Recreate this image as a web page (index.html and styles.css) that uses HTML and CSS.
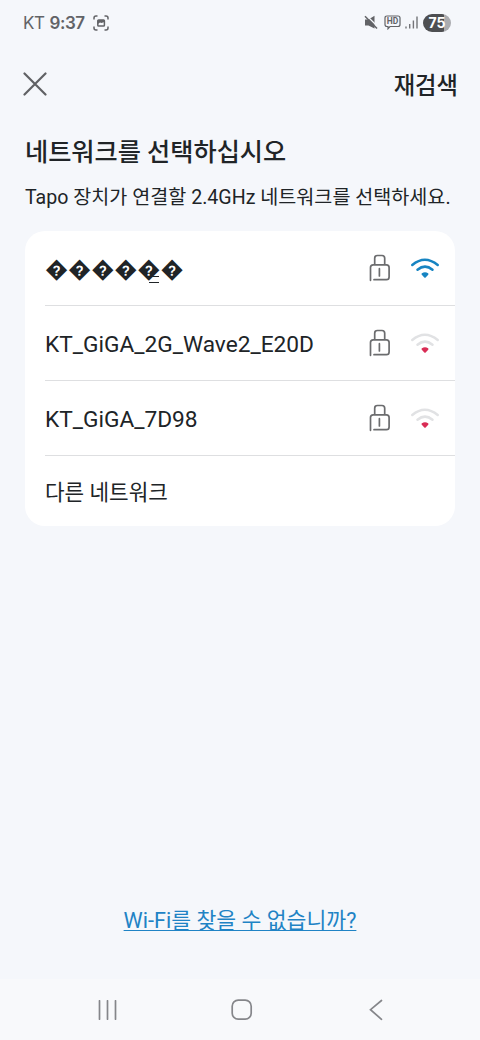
FILE: index.html
```html
<!DOCTYPE html>
<html lang="ko">
<head>
<meta charset="utf-8">
<title>네트워크 선택</title>
<link rel="stylesheet" href="styles.css">
</head>
<body>
<svg class="defs" width="0" height="0" aria-hidden="true">
  <symbol id="lock" viewBox="0 0 22 28">
    <path d="M5.7 10.2V4.2Q5.7 1.5 8.4 1.5H13Q15.700 1.500 15.700 4.200V10.200"/>
    <path d="M1.500 26.300V13.500Q1.500 10.800 4.200 10.800H17.400Q20.100 10.800 20.100 13.500V23Q20.100 25.700 17.400 25.700H5M10.400 14.700V22"/>
  </symbol>
  <symbol id="wifi" viewBox="0 0 30 22">
    <path class="arc" d="M2.300 8Q14.800-2.400 27.700 8"/>
    <path class="arc" d="M7.500 12.800Q15 6.500 22.500 12.800"/>
    <path class="dot" d="M11.900 16.200Q15 14.400 18.100 16.200Q18.900 16.900 18.200 17.700L15.700 20.400Q15 21.100 14.300 20.400L11.800 17.700Q11.100 16.900 11.900 16.200Z"/>
  </symbol>
</svg>
<div class="screen">
  <header class="status">
    <span class="carrier">KT</span>
    <span class="clock">9:37</span>
    <svg class="capture" width="16" height="16" viewBox="0 0 16 16">
      <path d="M1 4.500V3Q1 1 3 1H4.500M11.500 1H13Q15 1 15 3V4.500M15 11.500V13Q15 15 13 15H11.500M4.500 15H3Q1 15 1 13V11.500"/>
      <rect x="4.800" y="5" width="6.600" height="6" rx=".8"/>
      <path class="solid" d="M4.800 5H11.400V7L8.500 8L7 7.500L4.800 9Z"/>
    </svg>
    <div class="status-right">
      <svg class="mute" width="14" height="15" viewBox="0 0 14 15">
        <path class="solid" d="M1 4.500H4.500L10.500 .7V13.500L4.500 10.500H1Z"/>
        <path class="gap" d="M2.500 .5L14 12"/>
        <path class="slash" d="M1 1.200L13 13.500"/>
      </svg>
      <svg class="hd" width="17" height="15" viewBox="0 0 17 15">
        <path d="M3 1H14Q16 1 16 3V9.500Q16 11.500 14 11.500H6L4 13.700V11.500H3Q1 11.500 1 9.500V3Q1 1 3 1Z"/>
        <text x="2.700" y="9.200" textLength="11.500">HD</text>
      </svg>
      <svg class="signal" width="13" height="13" viewBox="0 0 13 13">
        <path d="M1 10.500V12.500M4.700 8V12.500M8.400 4.500V12.500M12 .5V12.500"/>
      </svg>
      <span class="battery">75</span>
    </div>
  </header>
  <nav class="toolbar">
    <svg width="24" height="24" viewBox="0 0 24 24"><path d="M1.500 1.500L22.500 22.500M22.500 1.500L1.500 22.500"/></svg>
    <span class="rescan">재검색</span>
  </nav>
  <main class="content">
    <h1>네트워크를 선택하십시오</h1>
    <p class="hint">Tapo 장치가 연결할 2.4GHz 네트워크를 선택하세요.</p>
    <ul class="card">
      <li class="row"><span class="ssid garbled">����<span class="marked">�</span>�</span>
        <svg class="lock" width="22" height="28"><use href="#lock"/></svg>
        <svg class="wifi strong" width="30" height="22"><use href="#wifi"/></svg></li>
      <li class="row"><span class="ssid">KT_GiGA_2G_Wave2_E20D</span>
        <svg class="lock" width="22" height="28"><use href="#lock"/></svg>
        <svg class="wifi poor" width="30" height="22"><use href="#wifi"/></svg></li>
      <li class="row"><span class="ssid">KT_GiGA_7D98</span>
        <svg class="lock" width="22" height="28"><use href="#lock"/></svg>
        <svg class="wifi poor" width="30" height="22"><use href="#wifi"/></svg></li>
      <li class="row other"><span class="ssid">다른 네트워크</span></li>
    </ul>
  </main>
  <a class="help">Wi-Fi를 찾을 수 없습니까?</a>
  <footer class="navbar">
    <svg width="20" height="20" viewBox="0 0 20 20"><path d="M1.500 .8V19.200M9.500 .8V19.200M17.500 .8V19.200"/></svg>
    <svg width="22" height="22" viewBox="0 0 22 22"><rect x="1.200" y="1.200" width="19" height="19" rx="6"/></svg>
    <svg width="14" height="22" viewBox="0 0 14 22"><path d="M12.500 1.500L1.500 10.700L12.500 20.300"/></svg>
  </footer>
</div>
</body>
</html>
```
FILE: styles.css
```css
* { box-sizing: border-box; }
body {
  margin: 0;
  background: #f5f7fb;
  color: #202427;
  font-family: Roboto, "Noto Sans CJK KR", sans-serif;
}
svg { display: block; flex: none; fill: none; }
.defs { position: absolute; }
.screen { width: 480px; height: 1040px; display: flex; flex-direction: column; }
.status {
  height: 45px;
  padding: 0 29px 0 23px;
  display: flex;
  align-items: center;
  color: #626367;
  font-family: Inter, sans-serif;
  font-size: 17px;
}
.carrier { letter-spacing: -.5px; }
.clock { margin-left: 5px; font-weight: 600; letter-spacing: -.4px; }
.capture { margin-left: 8px; stroke: #626367; stroke-width: 1.500; }
.solid { fill: #626367; stroke: none; }
.status-right { margin-left: auto; display: flex; align-items: center; }
.gap { stroke: #f5f7fb; stroke-width: 1.300; }
.slash { stroke: #626367; stroke-width: 1.500; }
.hd { margin-left: 6px; stroke: #626367; stroke-width: 1.200; }
.hd text { font: 700 8.500px Roboto, sans-serif; fill: #626367; stroke: none; }
.signal { margin-left: 4px; stroke: #737478; stroke-width: 1.400; }
.battery {
  width: 28px;
  height: 18px;
  margin-left: 5px;
  border-radius: 9px;
  background: linear-gradient(90deg, #4e4f52 75%, #abacb0 75%);
  color: #fff;
  font-size: 14px;
  font-weight: 700;
  line-height: 18px;
  text-align: center;
}
.toolbar {
  height: 78px;
  padding: 0 22px 0 23px;
  display: flex;
  align-items: center;
  justify-content: space-between;
}
.toolbar svg { stroke: #606164; stroke-width: 2.200; stroke-linecap: round; }
.rescan { font-size: 23.300px; font-weight: 500; }
.content { padding: 0 25px; }
h1 { margin: 12px 0 0; font-size: 25.200px; line-height: 36px; font-weight: 500; white-space: nowrap; }
.hint { margin: 13px 0 0; font-size: 19.600px; line-height: 28px; white-space: nowrap; }
.card { list-style: none; margin: 19px 0 0; padding: 0 0 0 20px; border-radius: 20px; background: #fff; }
.row { height: 75px; padding-right: 15px; display: flex; align-items: center; border-bottom: 1px solid #dedfe1; }
.row.other { height: 70px; border: 0; }
.ssid { flex: 1; padding-top: 3px; font-size: 22.700px; white-space: nowrap; }
.ssid.garbled { padding-top: 1px; font-size: 22.500px; }
.other .ssid { padding: 0 0 2px; font-size: 21.300px; }
.marked { position: relative; }
.marked::after {
  content: "";
  position: absolute;
  right: 1px;
  bottom: -1px;
  width: 10px;
  height: 5px;
  border: solid #202427;
  border-width: 1px 0;
}
.lock { margin-right: 19px; stroke: #6b6c6e; stroke-width: 1.700; stroke-linecap: round; }
.arc { stroke-width: 2.500; stroke-linecap: round; }
.strong { stroke: #1684c2; fill: #1684c2; }
.poor { stroke: #e1e2e4; fill: #d92c55; }
.arc { fill: none; }
.dot { stroke: none; }
.help {
  margin: auto auto 41px;
  color: #1f83c5;
  font-size: 21.600px;
  line-height: 34px;
  text-decoration: underline;
  text-decoration-thickness: 1px;
  text-underline-offset: 2px;
  text-decoration-skip-ink: none;
}
.navbar {
  height: 61px;
  padding: 0 97px 0 98px;
  display: flex;
  align-items: center;
  justify-content: space-between;
  background: #f8f9fb;
}
.navbar svg { stroke: #85868a; stroke-width: 1.700; stroke-linecap: round; }
.navbar svg:nth-child(2) { margin-right: 3px; }
```
